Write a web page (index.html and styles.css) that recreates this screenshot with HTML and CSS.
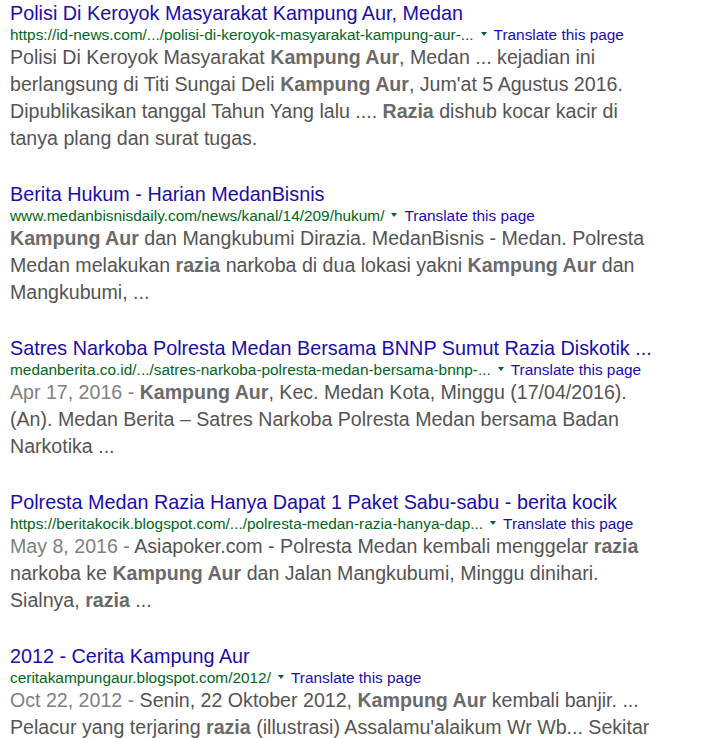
FILE: index.html
```html
<!DOCTYPE html>
<html>
<head>
<meta charset="utf-8">
<link rel="stylesheet" href="styles.css">
</head>
<body>
<div class="results">
  <div class="result">
    <h3 class="title"><a href="#">Polisi Di Keroyok Masyarakat Kampung Aur, Medan</a></h3>
    <div class="meta"><cite class="url">https://id-news.com/.../polisi-di-keroyok-masyarakat-kampung-aur-...</cite><span class="arrow"></span><a class="translate" href="#">Translate this page</a></div>
    <p class="snippet">Polisi Di Keroyok Masyarakat <b>Kampung Aur</b>, Medan ... kejadian ini berlangsung di Titi Sungai Deli <b>Kampung Aur</b>, Jum'at 5 Agustus 2016. Dipublikasikan tanggal Tahun Yang lalu .... <b>Razia</b> dishub kocar kacir di tanya plang dan surat tugas.</p>
  </div>
  <div class="result">
    <h3 class="title"><a href="#">Berita Hukum - Harian MedanBisnis</a></h3>
    <div class="meta"><cite class="url">www.medanbisnisdaily.com/news/kanal/14/209/hukum/</cite><span class="arrow"></span><a class="translate" href="#">Translate this page</a></div>
    <p class="snippet"><b>Kampung Aur</b> dan Mangkubumi Dirazia. MedanBisnis - Medan. Polresta Medan melakukan <b>razia</b> narkoba di dua lokasi yakni <b>Kampung Aur</b> dan Mangkubumi, ...</p>
  </div>
  <div class="result">
    <h3 class="title"><a href="#">Satres Narkoba Polresta Medan Bersama BNNP Sumut Razia Diskotik ...</a></h3>
    <div class="meta"><cite class="url">medanberita.co.id/.../satres-narkoba-polresta-medan-bersama-bnnp-...</cite><span class="arrow"></span><a class="translate" href="#">Translate this page</a></div>
    <p class="snippet"><span class="date">Apr 17, 2016 - </span><b>Kampung Aur</b>, Kec. Medan Kota, Minggu (17/04/2016). (An). Medan Berita – Satres Narkoba Polresta Medan bersama Badan Narkotika ...</p>
  </div>
  <div class="result">
    <h3 class="title"><a href="#">Polresta Medan Razia Hanya Dapat 1 Paket Sabu-sabu - berita kocik</a></h3>
    <div class="meta"><cite class="url">https://beritakocik.blogspot.com/.../polresta-medan-razia-hanya-dap...</cite><span class="arrow"></span><a class="translate" href="#">Translate this page</a></div>
    <p class="snippet"><span class="date">May 8, 2016 - </span>Asiapoker.com - Polresta Medan kembali menggelar <b>razia</b> narkoba ke <b>Kampung Aur</b> dan Jalan Mangkubumi, Minggu dinihari. Sialnya, <b>razia</b> ...</p>
  </div>
  <div class="result">
    <h3 class="title"><a href="#">2012 - Cerita Kampung Aur</a></h3>
    <div class="meta"><cite class="url">ceritakampungaur.blogspot.com/2012/</cite><span class="arrow"></span><a class="translate" href="#">Translate this page</a></div>
    <p class="snippet"><span class="date">Oct 22, 2012 - </span>Senin, 22 Oktober 2012, <b>Kampung Aur</b> kembali banjir. ... Pelacur yang terjaring <b>razia</b> (illustrasi) Assalamu'alaikum Wr Wb... Sekitar jam 3 pagi air mulai naik.</p>
  </div>
</div>
</body>
</html>
```
FILE: styles.css
```css
html, body {
  margin: 0;
  padding: 0;
  background: #ffffff;
}

body {
  font-family: "Liberation Sans", Arial, sans-serif;
  overflow: hidden;
}

.results {
  padding: 2px 0 0 10px;
}

.result {
  margin-bottom: 31px;
}

.title {
  margin: 0;
  font-size: 19.8px;
  line-height: 23px;
  font-weight: normal;
  white-space: nowrap;
}

.title a {
  color: #1a0dab;
  text-decoration: none;
}

.meta {
  font-size: 15.4px;
  line-height: 19px;
  white-space: nowrap;
}

.url {
  font-style: normal;
  color: #006621;
}

.arrow {
  display: inline-block;
  width: 0;
  height: 0;
  border-top: 4px solid #006621;
  border-left: 3px solid transparent;
  border-right: 3px solid transparent;
  margin: 0 7px 0 7px;
  vertical-align: 4px;
}

.translate {
  color: #1a0dab;
  text-decoration: none;
}

.snippet {
  margin: 0;
  max-width: 640px;
  font-size: 19.6px;
  line-height: 27px;
  color: #545454;
}

.snippet b {
  color: #6a6a6a;
}

.date {
  color: #808080;
}
```
